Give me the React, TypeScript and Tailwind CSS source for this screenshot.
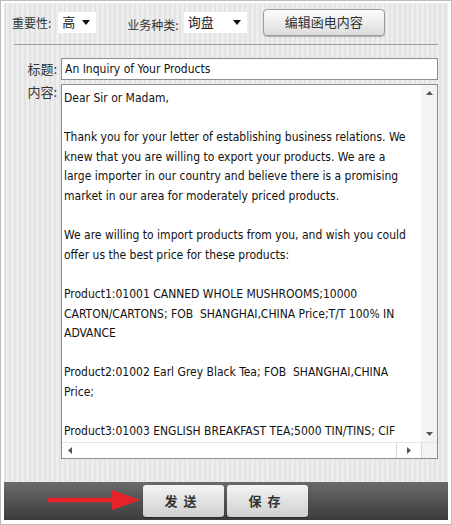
import React from "react";

const lines = [
  "Dear Sir or Madam,",
  "",
  "Thank you for your letter of establishing business relations. We",
  "knew that you are willing to export your products. We are a",
  "large importer in our country and believe there is a promising",
  "market in our area for moderately priced products.",
  "",
  "We are willing to import products from you, and wish you could",
  "offer us the best price for these products:",
  "",
  "Product1:01001 CANNED WHOLE MUSHROOMS;10000",
  "CARTON/CARTONS; FOB  SHANGHAI,CHINA Price;T/T 100% IN",
  "ADVANCE",
  "",
  "Product2:01002 Earl Grey Black Tea; FOB  SHANGHAI,CHINA",
  "Price;",
  "",
  "Product3:01003 ENGLISH BREAKFAST TEA;5000 TIN/TINS; CIF",
];

function Caret() {
  return (
    <svg width="8" height="5" viewBox="0 0 8 5" className="shrink-0">
      <path d="M0 0h8L4 5z" fill="#111" />
    </svg>
  );
}

function Arrow({ dir }: { dir: "up" | "down" | "left" | "right" }) {
  const d = {
    up: "M0 4h7L3.5 0z",
    down: "M0 0h7L3.5 4z",
    left: "M4 0v7L0 3.5z",
    right: "M0 0v7L4 3.5z",
  }[dir];
  const vertical = dir === "up" || dir === "down";
  return (
    <svg width={vertical ? 7 : 4} height={vertical ? 4 : 7} viewBox={vertical ? "0 0 7 4" : "0 0 4 7"}>
      <path d={d} fill="#555" />
    </svg>
  );
}

export default function App() {
  const cn = { fontFamily: '"Noto Sans CJK SC", "Liberation Sans", sans-serif' };
  const en = { fontFamily: '"DejaVu Sans Condensed", "DejaVu Sans", "Noto Sans CJK SC", sans-serif', fontStretch: "condensed" };

  return (
    <div className="flex h-[525px] w-[452px] flex-col border border-[#bcbcbc] bg-white px-[3px] pt-[2px] pb-[4px]">
      <div className="flex flex-1 flex-col bg-[repeating-linear-gradient(90deg,#e3e3e3_0px,#e3e3e3_2px,#ededed_2px,#ededed_5px)]">
        {/* top row */}
        <div className="flex h-[38px] items-center pl-[8px] text-[12px] text-[#333]" style={cn}>
          <span className="mt-[1px]">重要性:</span>
          <div className="ml-[7px] flex h-[21px] w-[38px] items-center justify-between bg-white pl-[4px] pr-[6px] text-[13px] text-[#222]">
            <span>高</span>
            <Caret />
          </div>
          <span className="ml-[31px] mt-[6px]">业务种类:</span>
          <div className="ml-[5px] flex h-[21px] w-[63px] items-center justify-between bg-white pl-[4px] pr-[6px] text-[13px] text-[#222]">
            <span>询盘</span>
            <Caret />
          </div>
          <button className="ml-[16px] h-[27px] w-[122px] rounded-[4px] border border-[#9a9a9a] bg-[linear-gradient(#fdfdfd,#dcdcdc)] text-[13px] text-[#333] shadow-[0_1px_1px_rgba(0,0,0,0.25)]">
            编辑函电内容
          </button>
        </div>

        <div className="mx-[10px] mt-[3px] h-px bg-[#9e9e9e]" />

        {/* title row */}
        <div className="mt-[13px] flex items-center pr-[10px]">
          <span className="w-[57px] shrink-0 pr-[4px] text-right text-[13px] text-[#333]" style={cn}>
            标题:
          </span>
          <div className="flex h-[22px] flex-1 items-center border border-[#8d8d8d] bg-white pl-[3px] text-[12px] text-[#111]" style={en}>
            An Inquiry of Your Products
          </div>
        </div>

        {/* content row */}
        <div className="mt-[4px] flex pr-[10px]">
          <span className="w-[57px] shrink-0 pr-[4px] text-right text-[13px] leading-[16px] text-[#333]" style={cn}>
            内容:
          </span>
          <div className="flex h-[375px] min-w-0 flex-1 flex-col border border-[#8d8d8d] bg-white">
            <div className="flex min-h-0 flex-1 overflow-hidden">
              <div className="min-w-0 flex-1 overflow-hidden pl-[2px] pt-[4px] text-[12px] leading-[19.6px] text-[#111]" style={en}>
                {lines.map((l, i) => (
                  <div key={i} className="h-[19.6px] whitespace-pre">
                    {l}
                  </div>
                ))}
              </div>
              <div className="flex w-[16px] shrink-0 flex-col items-center justify-between bg-[#f3f3f3] py-[6px]">
                <Arrow dir="up" />
                <Arrow dir="down" />
              </div>
            </div>
            <div className="flex h-[16px] shrink-0 border-t border-[#e4e4e4]">
              <div className="flex flex-1 items-center justify-between pl-[6px]">
                <Arrow dir="left" />
                <div className="flex h-full w-[25px] items-center justify-center border-l border-[#d8d8d8]">
                  <Arrow dir="right" />
                </div>
              </div>
              <div className="w-[16px] border-l border-[#d8d8d8] bg-[#f3f3f3]" />
            </div>
          </div>
        </div>
        <div className="flex-1" />
      </div>

      {/* bottom bar */}
      <div className="relative flex h-[38px] items-center bg-[linear-gradient(#6a6a6a,#3c3c3c)] pl-[139px]">
        <svg className="absolute left-[42px] top-[6px]" width="94" height="24" viewBox="0 0 94 24">
          <path d="M3 12h66" stroke="#e8222a" strokeWidth="4.5" strokeLinecap="round" />
          <path d="M66 2L94 12L66 22z" fill="#e8222a" />
        </svg>
        <button className="h-[32px] w-[81px] rounded-[3px] bg-[linear-gradient(#f4f4f4,#cfcfcf)] text-[13px] font-bold tracking-[6px] text-[#333] shadow-[0_1px_1px_rgba(0,0,0,0.4)]" style={cn}>
          发送
        </button>
        <button className="ml-[3px] h-[32px] w-[81px] rounded-[3px] bg-[linear-gradient(#f4f4f4,#cfcfcf)] text-[13px] font-bold tracking-[6px] text-[#333] shadow-[0_1px_1px_rgba(0,0,0,0.4)]" style={cn}>
          保存
        </button>
      </div>
    </div>
  );
}
